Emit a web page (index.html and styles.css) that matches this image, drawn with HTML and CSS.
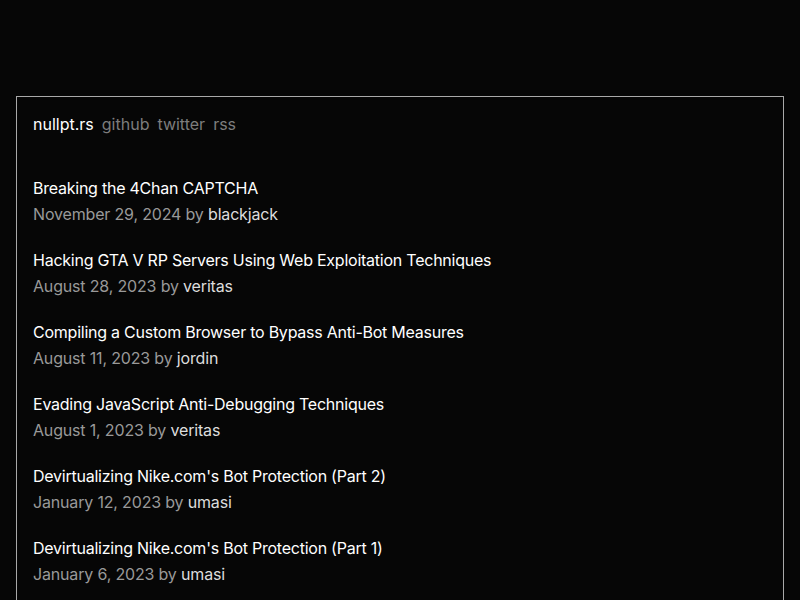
FILE: index.html
```html
<!DOCTYPE html>
<html>
<head>
<meta charset="utf-8">
<link rel="stylesheet" href="styles.css">
</head>
<body>
<main class="box">
  <nav class="nav">
    <a class="brand" href="#">nullpt.rs</a>
    <a class="link" href="#">github</a>
    <a class="link" href="#">twitter</a>
    <a class="link" href="#">rss</a>
  </nav>
  <ul class="posts">
    <li class="post">
      <a class="title" href="#">Breaking the 4Chan CAPTCHA</a>
      <div class="meta">November 29, 2024 by <span class="author">blackjack</span></div>
    </li>
    <li class="post">
      <a class="title" href="#">Hacking GTA V RP Servers Using Web Exploitation Techniques</a>
      <div class="meta">August 28, 2023 by <span class="author">veritas</span></div>
    </li>
    <li class="post">
      <a class="title" href="#">Compiling a Custom Browser to Bypass Anti-Bot Measures</a>
      <div class="meta">August 11, 2023 by <span class="author">jordin</span></div>
    </li>
    <li class="post">
      <a class="title" href="#">Evading JavaScript Anti-Debugging Techniques</a>
      <div class="meta">August 1, 2023 by <span class="author">veritas</span></div>
    </li>
    <li class="post">
      <a class="title" href="#">Devirtualizing Nike.com's Bot Protection (Part 2)</a>
      <div class="meta">January 12, 2023 by <span class="author">umasi</span></div>
    </li>
    <li class="post">
      <a class="title" href="#">Devirtualizing Nike.com's Bot Protection (Part 1)</a>
      <div class="meta">January 6, 2023 by <span class="author">umasi</span></div>
    </li>
  </ul>
</main>
</body>
</html>
```
FILE: styles.css
```css
html, body {
  margin: 0;
  background: #060606;
}
body {
  font-family: Inter, "Liberation Sans", sans-serif;
  font-size: 16px;
  color: #fff;
}
.box {
  margin: 96px 16px 0;
  border: 1px solid #a8a8a8;
  border-bottom: none;
  padding: 15px 16px 40px;
  min-height: 600px;
  background: #060606;
}
.nav {
  display: flex;
  gap: 8px;
  line-height: 24px;
}
.nav a {
  text-decoration: none;
}
.brand { color: #fff; }
.link { color: #7d7d7d; }
.posts {
  list-style: none;
  margin: 39px 0 0;
  padding: 0;
  display: flex;
  flex-direction: column;
  gap: 20px;
}
.post {
  display: flex;
  flex-direction: column;
  line-height: 26px;
}
.title {
  color: #fff;
  text-decoration: none;
  letter-spacing: -0.24px;
}
.meta {
  color: #999;
  letter-spacing: -0.17px;
}
.author {
  color: #ddd;
}
```
